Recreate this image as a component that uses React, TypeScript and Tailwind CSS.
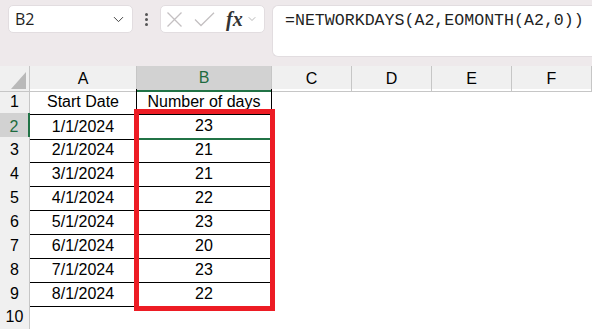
import { ChevronDown } from "lucide-react";

const cols = ["A", "B", "C", "D", "E", "F"];
const data = [
  ["1/1/2024", "23"],
  ["2/1/2024", "21"],
  ["3/1/2024", "21"],
  ["4/1/2024", "22"],
  ["5/1/2024", "23"],
  ["6/1/2024", "20"],
  ["7/1/2024", "23"],
  ["8/1/2024", "22"],
];

const grid = "grid grid-cols-[30px_107px_135px_80px_80px_80px_80px]";

function FormulaBar() {
  return (
    <div className="flex h-[66px] items-start bg-[#eee9eb] pt-[5px] pl-2">
      <div className="flex h-7 w-[125px] items-center justify-between rounded-[5px] border border-[#e2dde0] bg-white pl-[6px] pr-[5px] font-['Open_Sans',sans-serif] text-[16px] text-[#1f1f1f]">
        <span>B2</span>
        <ChevronDown size={17} strokeWidth={1.4} className="text-[#444]" />
      </div>
      <div className="flex h-7 w-[27px] flex-col items-center justify-center gap-[2px]">
        <span className="h-[3px] w-[3px] rounded-full bg-[#555]" />
        <span className="h-[3px] w-[3px] rounded-full bg-[#555]" />
        <span className="h-[3px] w-[3px] rounded-full bg-[#555]" />
      </div>
      <div className="flex h-7 w-[105px] items-center rounded-[5px] border border-[#e2dde0] bg-white pl-[5px]">
        <svg width="17" height="17" viewBox="0 0 17 17" className="text-[#c4c0c2]">
          <path d="M1.5 1.5 L15.5 15.5 M15.5 1.5 L1.5 15.5" stroke="currentColor" strokeWidth="1.3" fill="none" />
        </svg>
        <svg width="21" height="15" viewBox="0 0 21 15" className="ml-[11px] text-[#c4c0c2]">
          <path d="M1 7.5 L7 13.5 L20 0.8" stroke="currentColor" strokeWidth="1.3" fill="none" />
        </svg>
        <span className="ml-[11px] font-['Liberation_Serif',serif] text-[20px] font-bold italic leading-none text-[#333]">fx</span>
        <ChevronDown size={12} strokeWidth={1.4} className="ml-[3px] text-[#999]" />
      </div>
      <div className="ml-[7px] flex h-[52px] flex-1 rounded-l-[6px] border border-r-0 border-[#e2dde0] bg-white pl-[12px] pt-[3px] font-['Liberation_Mono',monospace] text-[16.6px] text-[#1f1f1f]">
        =NETWORKDAYS(A2,EOMONTH(A2,0))
      </div>
    </div>
  );
}

function Sheet() {
  return (
    <div className="relative font-['Liberation_Sans',sans-serif] text-[16px] text-black">
      <div className={`${grid} h-[23px] bg-[#f0f0f0]`}>
        <div className="relative border-r border-b border-[#c6c6c6]">
          <svg width="15" height="17" viewBox="0 0 15 17" className="absolute right-[3px] bottom-[2px]">
            <path d="M15 0 L15 17 L0 17 Z" fill="#b9b9b9" />
          </svg>
        </div>
        {cols.map((c) => (
          <div
            key={c}
            className={
              c === "B"
                ? "flex items-center justify-center border-r border-b-2 border-r-[#c6c6c6] border-b-[#217346] bg-[#d2d2d2] text-[#1e6b40]"
                : "flex items-center justify-center border-r border-b border-[#c6c6c6]"
            }
          >
            {c}
          </div>
        ))}
      </div>
      {Array.from({ length: 10 }, (_, i) => {
        const r = i + 1;
        const row = r >= 2 && r <= 9 ? data[r - 2] : null;
        const a = r === 1 ? "Start Date" : row ? row[0] : "";
        const b = r === 1 ? "Number of days" : row ? row[1] : "";
        const inTable = r <= 9;
        return (
          <div key={r} className={`${grid} h-6`}>
            <div
              className={
                r === 2
                  ? "flex items-center justify-center border-r-2 border-[#217346] bg-[#d2d2d2] text-[#1e6b40]"
                  : "flex items-center justify-center border-r border-[#c6c6c6] bg-[#f0f0f0]"
              }
            >
              {r}
            </div>
            <div className={`flex items-center justify-center pt-px ${inTable ? "border-r border-b border-black" : ""}`}>{a}</div>
            <div
              className={`flex items-center justify-center pt-px ${inTable ? "border-r border-black" : ""} ${
                r === 2 ? "border-b-2 border-b-[#217346]" : inTable ? "border-b border-black" : ""
              }`}
            >
              {b}
            </div>
            <div />
            <div />
            <div />
            <div />
          </div>
        );
      })}
      <div className="absolute left-[134px] top-[43px] h-[202px] w-[141px] border-[5px] border-[#ed1c24]" />
    </div>
  );
}

export default function App() {
  return (
    <div className="h-[332px] w-[592px] overflow-hidden bg-white">
      <FormulaBar />
      <Sheet />
    </div>
  );
}
